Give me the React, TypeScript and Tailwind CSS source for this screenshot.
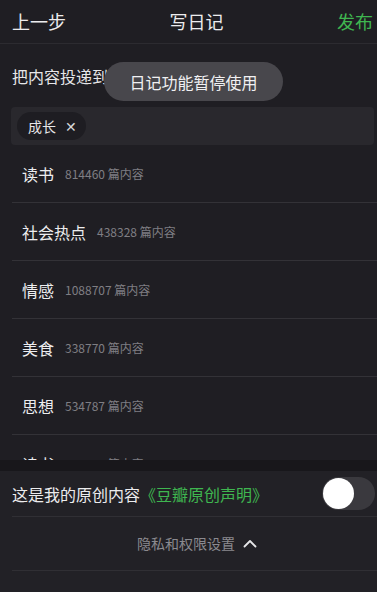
import React from "react";

const topics = [
  { name: "读书", count: "814460" },
  { name: "社会热点", count: "438328" },
  { name: "情感", count: "1088707" },
  { name: "美食", count: "338770" },
  { name: "思想", count: "534787" },
  { name: "读书", count: "412385" },
];

export default function App() {
  return (
    <div
      className="relative w-[377px] h-[592px] overflow-hidden bg-[#1f1e23] text-white"
      style={{ fontFamily: '"Noto Sans CJK SC", "Noto Sans", sans-serif' }}
    >
      {/* Header */}
      <div className="grid h-[44px] grid-cols-[1fr_auto_1fr] items-center border-b border-[#2c2b30] pl-3 pr-[4px]">
        <span className="text-[18px] text-[#ececee]">上一步</span>
        <span className="ml-[8px] text-[18px] text-[#ececee]">写日记</span>
        <span className="text-right text-[18px] text-[#3fb650]">发布</span>
      </div>

      {/* Target label */}
      <div className="px-3 pt-[20px] text-[16px] leading-[24px] text-[#e6e6e8]">
        把内容投递到
      </div>

      {/* Tag box */}
      <div className="ml-[11px] mr-[3px] mt-[19px] flex h-[38px] items-center rounded-sm bg-[#29282d] px-[6px]">
        <div className="flex h-[28px] items-center gap-[9px] rounded-full bg-[#1e1d22] pl-[11px] pr-[9px]">
          <span className="text-[14px] text-[#e6e6e8]">成长</span>
          <span className="text-[14px] leading-none text-[#d6d6d8]">✕</span>
        </div>
      </div>

      {/* Topic list */}
      <div className="h-[315px] overflow-hidden">
        {topics.map((t, i) => (
          <div
            key={i}
            className="ml-3 flex h-[58px] items-center border-b border-[#333237] pl-[10px]"
          >
            <span className="text-[16px] text-[#ededef]">{t.name}</span>
            <span className="ml-[11px] text-[12px] text-[#7f7e83]">
              {t.count} 篇内容
            </span>
          </div>
        ))}
      </div>

      {/* Bottom panel */}
      <div className="h-[11px] bg-[#18171b]" />
      <div className="bg-[#222126]">
        <div className="ml-3 flex h-[46px] items-center justify-between border-b border-[#302f34]">
          <span className="text-[16px] text-[#ececee]">
            这是我的原创内容<span className="text-[#3fb650]">《豆瓣原创声明》</span>
          </span>
          <div className="mr-[2px] flex h-[33px] w-[53px] items-center rounded-full bg-[#3a393e] pl-[1px]">
            <div className="h-[31px] w-[31px] rounded-full bg-white" />
          </div>
        </div>
        <div className="ml-3 flex h-[54px] items-center justify-center gap-[8px] border-b border-[#302f34] pl-[5px]">
          <span className="text-[14px] text-[#8b8a8f]">隐私和权限设置</span>
          <svg width="14" height="9" viewBox="0 0 14 9" fill="none">
            <path d="M1.5 7.5 L7 2 L12.5 7.5" stroke="#e6e6e8" strokeWidth="1.8" strokeLinecap="round" strokeLinejoin="round" />
          </svg>
        </div>
        <div className="h-[30px]" />
      </div>

      {/* Toast */}
      <div className="absolute left-[104px] top-[62px] flex h-[39px] w-[179px] items-center justify-center rounded-full bg-[#48474c]">
        <span className="text-[16px] text-[#f0f0f2]">日记功能暂停使用</span>
      </div>
    </div>
  );
}
